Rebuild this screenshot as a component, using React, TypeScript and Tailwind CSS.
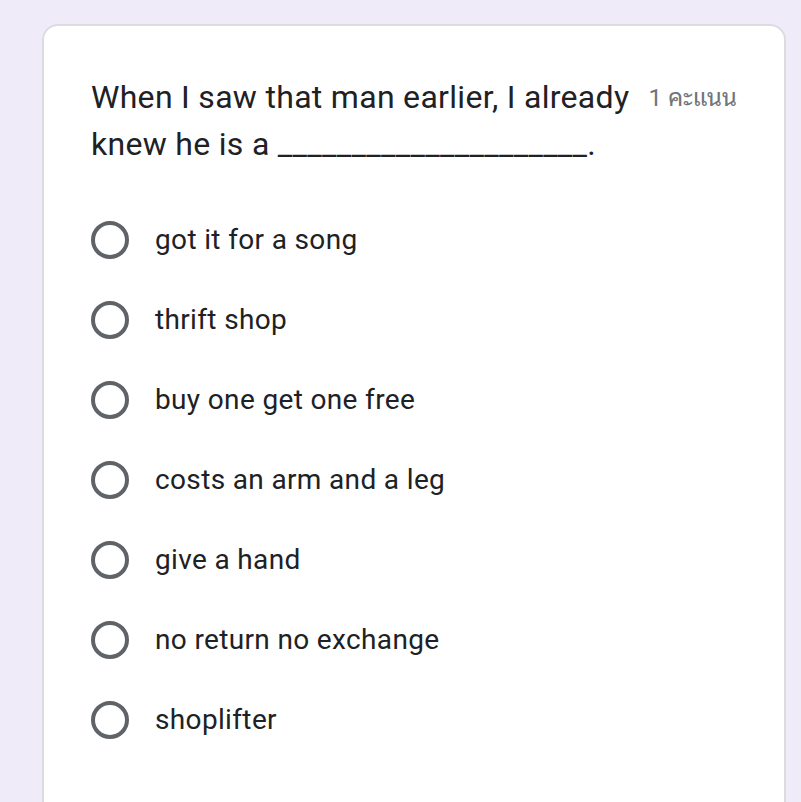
import React from "react";

const options = [
  "got it for a song",
  "thrift shop",
  "buy one get one free",
  "costs an arm and a leg",
  "give a hand",
  "no return no exchange",
  "shoplifter",
];

export default function App() {
  return (
    <div className="w-[801px] h-[802px] overflow-hidden bg-[#f0ebf8] pt-[24px] pl-[42px]" style={{ fontFamily: "Roboto, 'Noto Sans', sans-serif" }}>
      <div className="w-[744px] h-[820px] bg-white rounded-[16px] border-2 border-[#dadce0] px-[47px] pt-[48px]">
        <div className="flex items-start">
          <div className="flex-1 text-[32px] leading-[47px] text-[#202124] tracking-[0.3px]">
            When I saw that man earlier, I already knew he is a _____________________.
          </div>
          <div className="ml-[12px] mt-[10px] text-[24px] leading-[28px] text-[#70757a] whitespace-nowrap" style={{ fontFamily: "Roboto, 'Noto Sans Thai Looped', 'Noto Serif Thai', 'Noto Sans Thai', sans-serif" }}>
            1 คะแนน
          </div>
        </div>
        <div className="mt-[32px] flex flex-col">
          {options.map((o) => (
            <div key={o} className="h-[80px] flex items-center">
              <div className="w-[38px] h-[38px] rounded-full border-[4px] border-[#5f6368] shrink-0" />
              <div className="ml-[26px] text-[28px] text-[#202124] leading-[36px] tracking-[0.35px]">{o}</div>
            </div>
          ))}
        </div>
      </div>
    </div>
  );
}
